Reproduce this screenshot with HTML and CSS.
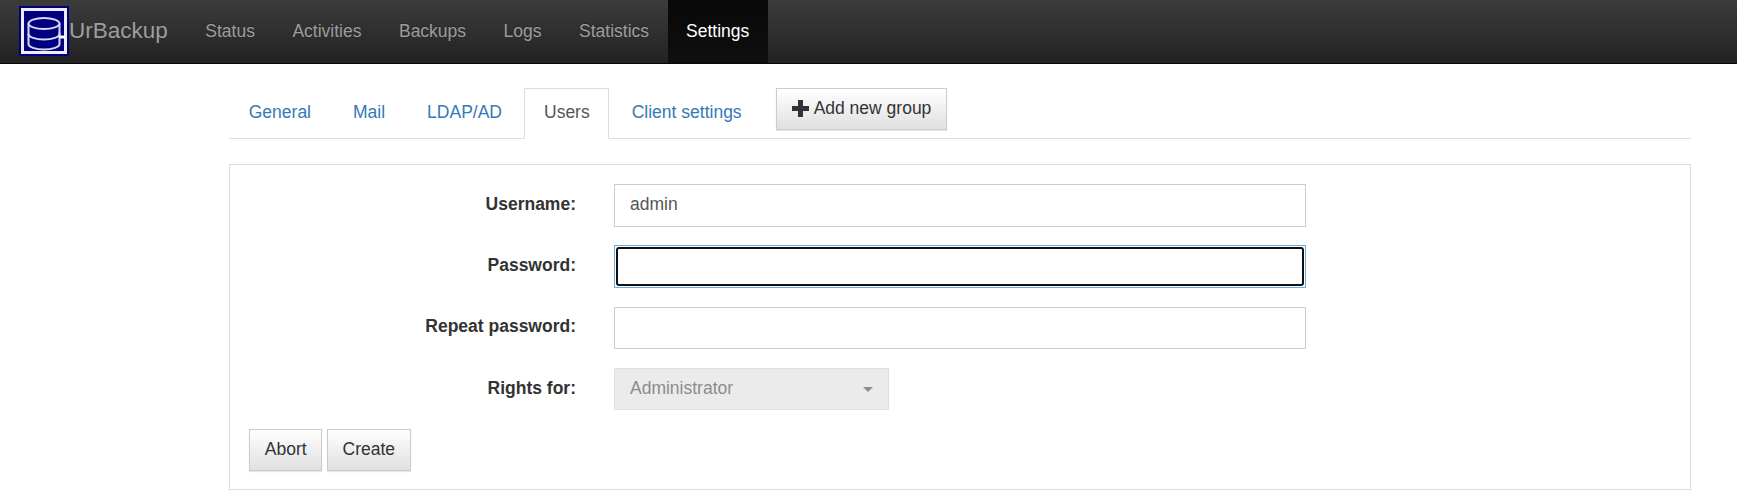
FILE: index.html
```html
<!DOCTYPE html>
<html>
	<head>
		<meta charset="UTF-8">
		<title>UrBackup</title>
		<link rel="stylesheet" href="styles.css">
	</head>
	<body>
		<!--top bar-->
		<nav class="navbar">
			<svg class="logo" viewBox="0 0 50 50" width="50" height="50">
				<rect width="50" height="50" fill="#000080"/>
				<rect x="3.500" y="3.500" width="43" height="43" fill="none" stroke="#eeeef8" stroke-width="3"/>
				<g fill="none" stroke="#d8d8f0" stroke-width="2">
					<ellipse cx="25" cy="17.500" rx="15.500" ry="5.500"/>
					<path d="M9.500 17.500V38c0 3 7 5.500 15.500 5.500S40.500 41 40.500 38V17.500"/>
					<path d="M9.500 28c0 3 7 5.500 15.500 5.500S40.500 31 40.500 28V26.500"/>
				</g>
				<path d="M40.500 31H46" fill="none" stroke="#fff" stroke-width="3"/>
			</svg>
			<a class="brand" href="#">UrBackup</a>
			<a class="nav-link" href="#">Status</a>
			<a class="nav-link" href="#">Activities</a>
			<a class="nav-link" href="#">Backups</a>
			<a class="nav-link" href="#">Logs</a>
			<a class="nav-link" href="#">Statistics</a>
			<a class="nav-link active" href="#">Settings</a>
		</nav>

		<div class="content">
			<!--tabs-->
			<div class="tabs">
				<a class="tab" href="#">General</a>
				<a class="tab" href="#">Mail</a>
				<a class="tab" href="#">LDAP/AD</a>
				<a class="tab active" href="#">Users</a>
				<a class="tab" href="#">Client settings</a>
				<button class="btn add-group" type="button">
					<svg class="plus" viewBox="0 0 17 17" width="17" height="17">
						<path d="M6 0h5v6h6v5h-6v6H6v-6H0V6h6z" fill="#333"/>
					</svg>
					Add new group
				</button>
			</div>

			<!--user form-->
			<div class="well">
				<div class="form-row">
					<label class="form-label">Username:</label>
					<input class="field" type="text" value="admin">
				</div>
				<div class="form-row">
					<label class="form-label">Password:</label>
					<div class="focus-ring">
						<input class="focus-input" type="password">
					</div>
				</div>
				<div class="form-row">
					<label class="form-label">Repeat password:</label>
					<input class="field" type="password">
				</div>
				<div class="form-row">
					<label class="form-label">Rights for:</label>
					<button class="select-btn" type="button" disabled>
						<span class="select-text">Administrator</span>
						<span class="caret"></span>
					</button>
				</div>
				<div class="actions">
					<button class="btn" type="button">Abort</button>
					<button class="btn" type="button">Create</button>
				</div>
			</div>
		</div>
	</body>
</html>
```

FILE: styles.css
```css
* {
	box-sizing: border-box;
}
body {
	margin: 0;
	font-family: "Liberation Sans", Arial, sans-serif;
	font-size: 17.5px;
	line-height: 25px;
	color: #333;
	background: #fff;
}
a {
	text-decoration: none;
}
.navbar {
	display: flex;
	align-items: stretch;
	height: 64px;
	padding-left: 19px;
	background: linear-gradient(to bottom, #3c3c3c, #222);
	border-bottom: 1px solid #080808;
}
.logo {
	flex: none;
	margin-top: 6px;
}
.brand {
	padding: 0 18.75px 0 0;
	font-size: 22.5px;
	line-height: 62px;
	color: #9d9d9d;
}
.nav-link {
	padding: 0 18.75px;
	line-height: 62px;
	color: #9d9d9d;
	text-shadow: 0 -1px 0 rgba(0, 0, 0, .25);
}
.nav-link.active {
	padding: 0 18.25px;
	color: #fff;
	background: linear-gradient(to bottom, #080808, #0f0f0f);
}
.content {
	margin: 24px 46px 0 229px;
}
.tabs {
	display: flex;
	align-items: flex-start;
	height: 51px;
	border-bottom: 1px solid #ddd;
}
.tab {
	height: 51px;
	margin-right: 2.5px;
	padding: 11px 18.75px;
	border: 1px solid transparent;
	color: #337ab7;
}
.tab.active {
	color: #555;
	background: #fff;
	border-color: #ddd;
	border-bottom-color: #fff;
}
.btn {
	height: 42px;
	padding: 0 14.75px 2px;
	font: inherit;
	color: #333;
	background: linear-gradient(to bottom, #fff, #e0e0e0);
	border: 1px solid #ccc;
	box-shadow: 0 1px 1px rgba(0, 0, 0, .1);
}
.add-group {
	display: flex;
	align-items: center;
	gap: 5px;
	margin-left: 12px;
	padding-bottom: 2px;
}
.plus {
	flex: none;
}
.well {
	display: flex;
	flex-direction: column;
	gap: 18.75px;
	margin-top: 25px;
	padding: 19px 19px 17.5px;
	border: 1px solid #ddd;
}
.form-row {
	display: grid;
	grid-template-columns: 327px 692px;
	column-gap: 38px;
	align-items: center;
	justify-items: start;
	height: 42.5px;
}
.form-label {
	justify-self: end;
	padding-bottom: 2px;
	font-weight: bold;
}
.field {
	width: 100%;
	height: 42.5px;
	padding: 0 15px 2px;
	font: inherit;
	color: #555;
	background: #fff;
	border: 1px solid #ccc;
}
.focus-ring {
	width: 100%;
	height: 42.5px;
	padding: 1px;
	border: 1px solid #66afe9;
}
.focus-input {
	display: block;
	width: 100%;
	height: 100%;
	padding: 0 13px;
	font: inherit;
	background: #fff;
	border: 2px solid #101010;
	border-radius: 3px;
	outline: none;
}
.select-btn {
	display: flex;
	align-items: center;
	justify-content: space-between;
	width: 275px;
	height: 42.5px;
	padding: 0 15px;
	font: inherit;
	color: #8c8c8c;
	background: #ebebeb;
	border: 1px solid #e0e0e0;
}
.select-text {
	padding-bottom: 2px;
}
.caret {
	width: 0;
	height: 0;
	border-top: 5px solid #8c8c8c;
	border-left: 5px solid transparent;
	border-right: 5px solid transparent;
}
.actions {
	display: flex;
	gap: 4.5px;
}
```
